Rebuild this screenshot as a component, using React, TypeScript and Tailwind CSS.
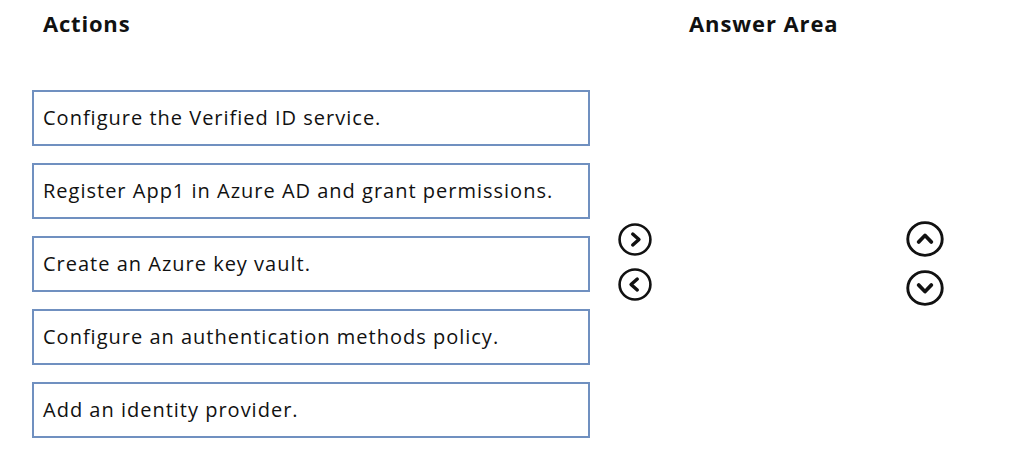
import React from 'react';

const actions = [
  'Configure the Verified ID service.',
  'Register App1 in Azure AD and grant permissions.',
  'Create an Azure key vault.',
  'Configure an authentication methods policy.',
  'Add an identity provider.',
];

function CircleArrow({ dir, w, h }: { dir: 'left' | 'right' | 'up' | 'down'; w: number; h: number }) {
  const paths: Record<string, string> = {
    right: 'M13 10 L18.5 15 L13 20',
    left: 'M17 10 L11.5 15 L17 20',
    up: 'M10 17.5 L15 12 L20 17.5',
    down: 'M10 12.5 L15 18 L20 12.5',
  };
  return (
    <svg width={w} height={h} viewBox="0 0 30 30" preserveAspectRatio="none" className="block">
      <ellipse cx="15" cy="15" rx="13.6" ry="13.6" fill="none" stroke="#111" strokeWidth="2.3" />
      <path d={paths[dir]} fill="none" stroke="#111" strokeWidth="3" strokeLinecap="round" strokeLinejoin="round" />
    </svg>
  );
}

export default function App() {
  return (
    <div className="w-[1022px] h-[449px] bg-white flex text-[#111] font-['Open_Sans',sans-serif]">
      <div className="ml-[32px] w-[558px] flex flex-col">
        <h2 className="pl-[11px] pt-[8px] h-[90px] text-[22px] font-bold leading-[30px] tracking-[0.8px]">Actions</h2>
        <div className="flex flex-col gap-[17px]">
          {actions.map((a, i) => (
            <div key={i} className="h-[56px] border-2 border-[#7090c0] flex items-center pl-[9px] text-[20px] tracking-[1px]">
              {a}
            </div>
          ))}
        </div>
      </div>

      <div className="w-[90px] flex flex-col items-center pt-[223px] gap-[12px]">
        <CircleArrow dir="right" w={34} h={33} />
        <CircleArrow dir="left" w={34} h={33} />
      </div>

      <div className="flex flex-col">
        <h2 className="pl-[9px] pt-[8px] text-[22px] font-bold leading-[30px] tracking-[0.9px]">Answer Area</h2>
        <div className="ml-[226px] mt-[183px] flex flex-col gap-[13px]">
          <CircleArrow dir="up" w={38} h={36} />
          <CircleArrow dir="down" w={38} h={36} />
        </div>
      </div>
    </div>
  );
}
